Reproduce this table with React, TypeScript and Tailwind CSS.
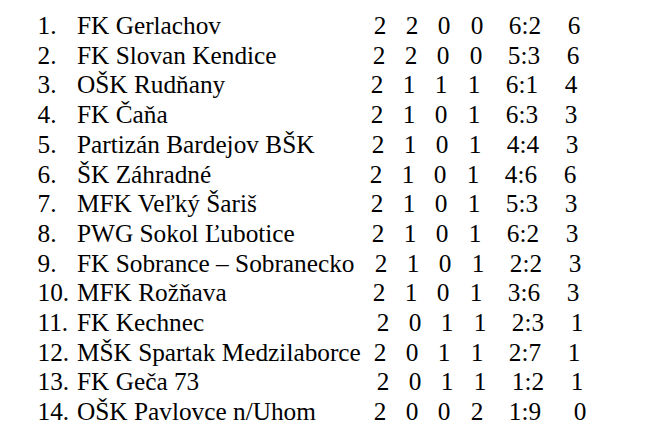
export default function App() {
  return (
    <div className="w-[650px] h-[437px] overflow-hidden bg-white pt-[11px] pl-[37.5px] text-[25.3px] leading-[29.7px] text-black font-['Liberation_Serif',serif]">
      {rows.map((r) => (
        <div key={r.n} className="flex whitespace-nowrap font-['Liberation_Serif',serif]">
          <span className="w-[39.5px] shrink-0 font-['Liberation_Serif',serif]">{r.n}</span>
          <span className={r.w}>{r.name}</span>
          <span className="w-[32px] shrink-0 text-center font-['Liberation_Serif',serif]">{r.s[0]}</span>
          <span className="w-[32px] shrink-0 text-center font-['Liberation_Serif',serif]">{r.s[1]}</span>
          <span className="w-[32px] shrink-0 text-center font-['Liberation_Serif',serif]">{r.s[2]}</span>
          <span className="w-[34px] shrink-0 text-center font-['Liberation_Serif',serif]">{r.s[3]}</span>
          <span className="w-[62px] shrink-0 text-center font-['Liberation_Serif',serif]">{r.s[4]}</span>
          <span className={r.p}>{r.s[5]}</span>
        </div>
      ))}
    </div>
  );
}

const NAME = "shrink-0 font-['Liberation_Serif',serif]";
const PTS = "w-[36px] shrink-0 text-center font-['Liberation_Serif',serif]";

const rows = [
  { n: '1.', name: 'FK Gerlachov', w: 'w-[287px] ' + NAME, s: ['2', '2', '0', '0', '6:2', '6'], p: PTS },
  { n: '2.', name: 'FK Slovan Kendice', w: 'w-[286px] ' + NAME, s: ['2', '2', '0', '0', '5:3', '6'], p: PTS },
  { n: '3.', name: 'O\u0160K Rud\u0148any', w: 'w-[284px] ' + NAME, s: ['2', '1', '1', '1', '6:1', '4'], p: PTS },
  { n: '4.', name: 'FK \u010Ca\u0148a', w: 'w-[284px] ' + NAME, s: ['2', '1', '0', '1', '6:3', '3'], p: PTS },
  { n: '5.', name: 'Partiz\u00E1n Bardejov B\u0160K', w: 'w-[285px] ' + NAME, s: ['2', '1', '0', '1', '4:4', '3'], p: PTS },
  { n: '6.', name: '\u0160K Z\u00E1hradn\u00E9', w: 'w-[283px] ' + NAME, s: ['2', '1', '0', '1', '4:6', '6'], p: PTS },
  { n: '7.', name: 'MFK Ve\u013Ek\u00FD \u0160ari\u0161', w: 'w-[284px] ' + NAME, s: ['2', '1', '0', '1', '5:3', '3'], p: PTS },
  { n: '8.', name: 'PWG Sokol \u013Dubotice', w: 'w-[285px] ' + NAME, s: ['2', '1', '0', '1', '6:2', '3'], p: PTS },
  { n: '9.', name: 'FK Sobrance \u2013 Sobranecko', w: 'w-[288px] ' + NAME, s: ['2', '1', '0', '1', '2:2', '3'], p: PTS },
  { n: '10.', name: 'MFK Ro\u017E\u0148ava', w: 'w-[286px] ' + NAME, s: ['2', '1', '0', '1', '3:6', '3'], p: PTS },
  { n: '11.', name: 'FK Kechnec', w: 'w-[290px] ' + NAME, s: ['2', '0', '1', '1', '2:3', '1'], p: PTS },
  { n: '12.', name: 'M\u0160K Spartak Medzilaborce', w: 'w-[287px] ' + NAME, s: ['2', '0', '1', '1', '2:7', '1'], p: PTS },
  { n: '13.', name: 'FK Ge\u010Da 73', w: 'w-[290px] ' + NAME, s: ['2', '0', '1', '1', '1:2', '1'], p: PTS },
  { n: '14.', name: 'O\u0160K Pavlovce n/Uhom', w: 'w-[287px] ' + NAME, s: ['2', '0', '0', '2', '1:9', '0'], p: 'pl-[12px] ' + PTS },
];
